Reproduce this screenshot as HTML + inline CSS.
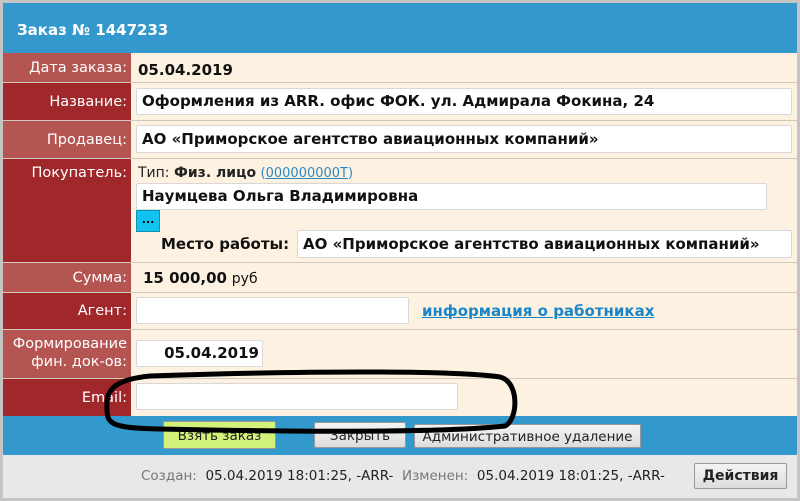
<!DOCTYPE html>
<html><head><meta charset="utf-8"><style>
*{margin:0;padding:0;box-sizing:border-box}
body{width:800px;height:501px;background:#c4c4c4;position:relative;overflow:hidden;font-family:"DejaVu Sans","Liberation Sans",sans-serif;}
.a{position:absolute}
.lab{position:absolute;left:3px;width:128px;color:#fff;font-size:14.5px;text-align:right;padding-right:4px;}
.l1{background:#b45552}.l2{background:#a1282a}
.sep{position:absolute;left:3px;width:794px;height:1px;background:#cfc8bd}
.inp{position:absolute;background:#fff;border:1px solid #d8d8d8;border-radius:2px;font-weight:bold;font-size:15px;color:#111;padding-left:5px;white-space:nowrap;overflow:hidden}
.btn{position:absolute;border:1px solid #999;border-radius:2px;background:linear-gradient(#f4f4f4,#ddd);font-size:13.5px;text-align:center;color:#222}
</style></head><body>
<div class="a" style="left:3px;top:3px;width:794px;height:50px;background:#3399cc;color:#fff;font-weight:bold;font-size:15px;padding:18px 0 0 14px">Заказ № 1447233</div>
<div class="a" style="left:131px;top:53px;width:666px;height:363px;background:#fdf2e1"></div>

<div class="lab l1" style="top:53px;height:29px;line-height:31px">Дата заказа:</div>
<div class="a" style="left:138px;top:61px;font-weight:bold;font-size:15px;color:#111">05.04.2019</div>
<div class="lab l2" style="top:82px;height:38px;line-height:40px">Название:</div>
<div class="inp" style="left:136px;top:88px;width:656px;height:27px;line-height:25px">Оформления из ARR. офис ФОК. ул. Адмирала Фокина, 24</div>
<div class="lab l1" style="top:120px;height:38px;line-height:40px">Продавец:</div>
<div class="inp" style="left:136px;top:125px;width:656px;height:28px;line-height:26px">АО «Приморское агентство авиационных компаний»</div>
<div class="lab l2" style="top:158px;height:104px;padding-top:7px">Покупатель:</div>
<div class="a" style="left:138px;top:165px;font-size:14px;color:#222">Тип: <b>Физ. лицо</b> <span style="color:#2a8ac4;font-size:13px">(<u>000000000T</u>)</span></div>
<div class="inp" style="left:136px;top:183px;width:631px;height:27px;line-height:25px">Наумцева Ольга Владимировна</div>
<div class="a" style="left:136px;top:210px;width:24px;height:22px;background:#11c3ee;border:1px solid #0a93b5;font-size:11px;font-weight:bold;text-align:center;line-height:18px">...</div>
<div class="a" style="left:161px;top:235px;font-weight:bold;font-size:15px;color:#111">Место работы:</div>
<div class="inp" style="left:297px;top:230px;width:495px;height:28px;line-height:26px">АО «Приморское агентство авиационных компаний»</div>
<div class="lab l1" style="top:262px;height:30px;line-height:32px">Сумма:</div>
<div class="a" style="left:143px;top:269px;font-size:15px;color:#111"><b>15 000,00</b> <span style="font-size:14px">руб</span></div>
<div class="lab l2" style="top:292px;height:37px;line-height:39px">Агент:</div>
<div class="inp" style="left:136px;top:297px;width:273px;height:27px"></div>
<div class="a" style="left:422px;top:302px;font-weight:bold;font-size:15px;color:#1a86c8;text-decoration:underline">информация о работниках</div>
<div class="lab l1" style="top:329px;height:49px;line-height:18px;padding-top:6px">Формирование<br>фин. док-ов:</div>
<div class="inp" style="left:136px;top:340px;width:127px;height:27px;line-height:25px;text-align:right;padding-right:3px">05.04.2019</div>
<div class="lab l2" style="top:378px;height:38px;line-height:40px">Email:</div>
<div class="inp" style="left:136px;top:383px;width:322px;height:27px"></div>
<div class="sep" style="top:82px"></div><div class="sep" style="top:120px"></div><div class="sep" style="top:158px"></div><div class="sep" style="top:262px"></div><div class="sep" style="top:292px"></div><div class="sep" style="top:329px"></div><div class="sep" style="top:378px"></div>

<div class="a" style="left:3px;top:416px;width:794px;height:39px;background:#3399cc"></div>
<div class="btn" style="left:163px;top:421px;width:113px;height:28px;line-height:28px;background:#d3f27a">Взять заказ</div>
<div class="btn" style="left:314px;top:422px;width:92px;height:26px;line-height:26px">Закрыть</div>
<div class="btn" style="left:414px;top:424px;width:227px;height:24px;line-height:24px">Административное удаление</div>
<div class="a" style="left:3px;top:455px;width:794px;height:43px;background:#e8e8e8"></div>
<div class="a" style="left:141px;top:468px;font-size:13.5px;color:#222;white-space:nowrap"><span style="color:#777">Создан:</span>&nbsp; 05.04.2019 18:01:25, -ARR-&nbsp; <span style="color:#777">Изменен:</span>&nbsp; 05.04.2019 18:01:25, -ARR-</div>
<div class="btn" style="left:694px;top:463px;width:93px;height:26px;line-height:24px;font-weight:bold;font-size:14px">Действия</div>

<svg class="a" style="left:0;top:0" width="800" height="501"><path d="M150,376 C300,371 450,370 500,377 C520,382 518,420 505,426 C440,433 300,432 160,429 C115,428 107,425 107,410 C106,392 110,380 150,376 Z" fill="none" stroke="#000" stroke-width="5"/></svg>
</body></html>
